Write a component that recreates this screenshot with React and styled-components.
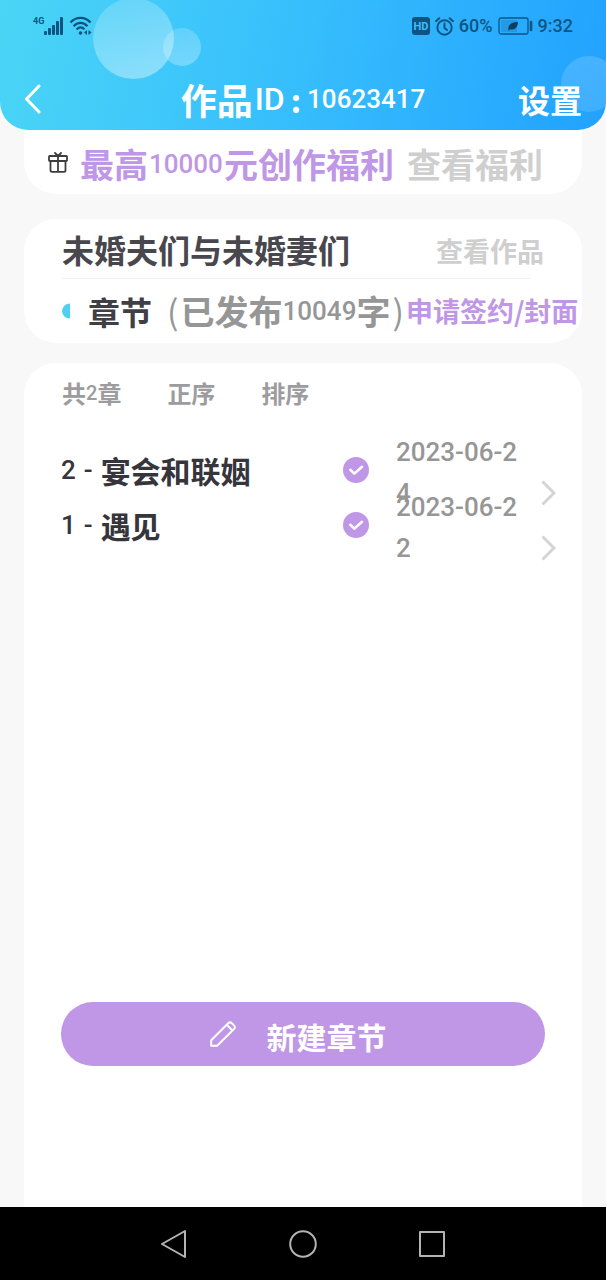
import React, { useState } from 'react';
import styled, { createGlobalStyle } from 'styled-components';

const GlobalStyle = createGlobalStyle`
  * {
    box-sizing: border-box;
  }
  body {
    margin: 0;
    background: #f8f8f8;
    font-family: 'Noto Sans CJK SC', sans-serif;
  }
  button {
    padding: 0;
    border: none;
    background: none;
    font-family: inherit;
    cursor: pointer;
  }
  a {
    text-decoration: none;
  }
  svg {
    flex-shrink: 0;
  }
`;

const Page = styled.div`
  min-height: 100vh;
  display: flex;
  flex-direction: column;
`;

const Header = styled.header`
  position: relative;
  overflow: hidden;
  border-radius: 0 0 28px 28px;
  background: linear-gradient(100deg, #4ad5f6 0%, #38c0fc 45%, #22a2ff 100%);
`;

const Bubble = styled.span`
  position: absolute;
  top: ${(props) => props.$top}px;
  left: ${(props) => props.$left};
  width: ${(props) => props.$size}px;
  height: ${(props) => props.$size}px;
  border-radius: 50%;
  background: linear-gradient(
    ${(props) => props.$angle},
    rgba(255, 255, 255, 0.16),
    rgba(255, 255, 255, ${(props) => props.$strength})
  );
`;

const StatusBar = styled.div`
  position: relative;
  display: flex;
  justify-content: space-between;
  align-items: center;
  height: 52px;
  padding: 0 33px;
  color: #0d5580;
`;

const StatusGroup = styled.div`
  display: flex;
  align-items: center;
  gap: 5px;
`;

const StatusText = styled.span`
  font-family: Roboto, sans-serif;
  font-size: 18px;
  font-weight: 500;
  line-height: 24px;
`;

const NavBar = styled.div`
  position: relative;
  display: grid;
  grid-template-columns: 1fr auto 1fr;
  align-items: center;
  height: 62px;
  margin-top: 16px;
  padding: 0 24px;
  color: #fff;
`;

const BackButton = styled.button`
  display: flex;
  justify-self: start;
  color: #fff;
`;

const Title = styled.h1`
  display: flex;
  align-items: center;
  margin: 0;
  font-size: 36px;
  font-weight: 700;
  line-height: 48px;
`;

const TitleId = styled.span`
  padding-left: 2px;
  font-family: Roboto, sans-serif;
  font-size: 32px;
  font-weight: 500;
`;

const Colon = styled.span`
  padding: 0 6px;
  font-size: 32px;
`;

const Num = styled.span`
  padding: 0 ${(props) => props.$gap || 0}px;
  font-family: Roboto, sans-serif;
  font-size: ${(props) => props.$size || 26}px;
  font-weight: ${(props) => props.$weight || 400};
`;

const SettingsButton = styled.button`
  justify-self: end;
  color: #fff;
  font-size: 32px;
  font-weight: 700;
  line-height: 48px;
`;

const Card = styled.section`
  margin: 0 24px;
  background: #fff;
  border-radius: 32px;
`;

const PromoCard = styled(Card)`
  display: flex;
  align-items: center;
  height: 64px;
  padding: 0 24px;
  border-radius: 0 0 32px 32px;
  white-space: nowrap;
`;

const PromoText = styled.strong`
  display: flex;
  align-items: center;
  margin: 0 13px 0 12px;
  padding-top: 4px;
  color: #c096e6;
  font-size: 34px;
  font-weight: 700;
  line-height: 48px;
`;

const PromoLink = styled.a`
  padding-top: 4px;
  color: #cfcfcf;
  font-size: 34px;
  font-weight: 700;
  line-height: 48px;
`;

const WorkCard = styled(Card)`
  margin-top: 25px;
  white-space: nowrap;
`;

const WorkRow = styled.div`
  display: flex;
  align-items: center;
  justify-content: space-between;
  height: 59px;
  padding: 0 38px;
`;

const WorkTitle = styled.h2`
  margin: 0;
  color: #47474d;
  font-size: 32px;
  font-weight: 700;
  line-height: 48px;
`;

const WorkLink = styled.a`
  padding-top: 4px;
  color: #cfcfcf;
  font-size: 27px;
  font-weight: 700;
  line-height: 48px;
`;

const Divider = styled.hr`
  height: 1px;
  margin: 0 52px 0 37px;
  border: none;
  background: #f1f1f1;
`;

const ChapterSummary = styled.div`
  display: flex;
  align-items: center;
  height: 64px;
  padding: 0 6px 0 37px;
`;

const SummaryLabel = styled.h3`
  margin: 0 13px 0 17px;
  color: #3f3f45;
  font-size: 32px;
  font-weight: 700;
  line-height: 48px;
`;

const SummaryCount = styled.span`
  display: flex;
  flex: 1;
  align-items: center;
  color: #969696;
  font-size: 34px;
  font-weight: 700;
  line-height: 48px;
`;

const Paren = styled.span`
  padding: 0 2px;
  font-weight: 400;
`;

const SignLink = styled.a`
  color: #c096e6;
  font-size: 27px;
  font-weight: 700;
  line-height: 48px;
`;

const ChaptersCard = styled(Card)`
  display: flex;
  flex: 1;
  flex-direction: column;
  margin-top: 20px;
  border-radius: 32px 32px 0 0;
`;

const Toolbar = styled.div`
  display: flex;
  align-items: center;
  gap: 46px;
  height: 60px;
  padding: 0 38px;
`;

const ChapterTotal = styled.span`
  display: flex;
  align-items: center;
  color: #9c9c9e;
  font-size: 24px;
  font-weight: 700;
  line-height: 36px;
`;

const SortButton = styled.button`
  color: #9c9c9e;
  font-size: 24px;
  font-weight: 700;
  line-height: 36px;
`;

const ChapterList = styled.ul`
  margin: 19px 0 0;
  padding: 0 0 20px;
  overflow: hidden;
  list-style: none;
`;

const ChapterRow = styled.li`
  display: flex;
  align-items: center;
  height: 55px;
  padding: 0 26px 0 37px;
`;

const ChapterLink = styled.a`
  display: flex;
  flex: 1;
  align-items: center;
  gap: 8px;
  color: #35353b;
  font-size: 30px;
  font-weight: 700;
  line-height: 48px;
`;

// narrow column, so the date wraps onto a second line
const ChapterDate = styled.time`
  width: 124px;
  margin: 0 21px 0 27px;
  padding-top: 6px;
  color: #969696;
  font-family: Roboto, sans-serif;
  font-size: 26px;
  font-weight: 500;
  line-height: 41px;
  word-break: break-all;
`;

const RowArrow = styled.span`
  display: flex;
  align-items: center;
  height: 41px;
  margin-top: 47px;
`;

const CreateButton = styled.button`
  display: flex;
  align-items: center;
  justify-content: center;
  gap: 31px;
  height: 64px;
  margin: auto 37px 141px;
  padding-right: 10px;
  border-radius: 32px;
  background: #c096e6;
  color: #fff;
  font-size: 30px;
  font-weight: 700;
`;

const CreateLabel = styled.span`
  padding-top: 4px;
  line-height: 48px;
`;

const SystemNav = styled.nav`
  display: flex;
  align-items: center;
  justify-content: center;
  gap: 100px;
  height: 73px;
  background: #000;
`;

const SystemButton = styled.button`
  display: flex;
`;

const SignalIcon = () => (
  <svg width="31" height="20" viewBox="0 0 31 20" fill="currentColor">
    <text x="0" y="8" fontSize="9" fontWeight="700" fontFamily="Roboto, sans-serif">4G</text>
    <rect x="11" y="15" width="3" height="4" rx="1" />
    <rect x="15" y="12" width="3" height="7" rx="1" />
    <rect x="19" y="9" width="3" height="10" rx="1" />
    <rect x="23" y="5" width="3" height="14" rx="1" />
    <rect x="27" y="1" width="3" height="18" rx="1" />
  </svg>
);

const WifiIcon = () => (
  <svg width="24" height="20" viewBox="0 0 24 20" fill="none" stroke="currentColor" strokeWidth="2.2">
    <path d="M1.5 6.5C7 0.2 16 0.2 21.5 6.5" />
    <path d="M4.6 10.2C8.6 5.8 14.6 5.8 18.4 10.2" />
    <path d="M7.6 13.4C10 10.8 13.2 10.8 15.4 13.4" />
    <circle cx="11.5" cy="17" r="1.8" fill="currentColor" stroke="none" />
    <path d="M18 14v5l-3-2.5zM19.5 14v5l3-2.5z" fill="currentColor" stroke="none" />
  </svg>
);

const HdIcon = () => (
  <svg width="18" height="18" viewBox="0 0 18 18">
    <rect width="18" height="18" rx="3" fill="currentColor" />
    <text x="9" y="13" textAnchor="middle" fontSize="11" fontWeight="700" fontFamily="Roboto, sans-serif" fill="#43bdfb">HD</text>
  </svg>
);

const AlarmIcon = () => (
  <svg width="19" height="19" viewBox="0 0 19 19" fill="none" stroke="currentColor" strokeWidth="2" strokeLinecap="round">
    <circle cx="9.5" cy="10.5" r="7.2" />
    <path d="M9.5 6.5v4.5l2.5 2M1 4.2L4.3 1.2M18 4.2L14.7 1.2" />
  </svg>
);

const BatteryIcon = () => (
  <svg width="35" height="18" viewBox="0 0 35 18" fill="none" stroke="currentColor">
    <rect x="1" y="1" width="29" height="16" rx="2" strokeWidth="1.3" />
    <rect x="3" y="3" width="16" height="12" fill="currentColor" fillOpacity="0.2" stroke="none" />
    <path d="M10.5 13.5C9.5 8 13 5.5 20 4.8C20 10.5 16.5 13.5 12 12.3L10.5 13.8z" fill="#0b3f62" stroke="none" />
    <path d="M33 5v8" strokeWidth="2.6" strokeLinecap="round" />
  </svg>
);

const BackIcon = () => (
  <svg width="17" height="30" viewBox="0 0 17 30" fill="none" stroke="currentColor" strokeWidth="3" strokeLinecap="round" strokeLinejoin="round">
    <path d="M15 2L2.5 15L15 28" />
  </svg>
);

const GiftIcon = () => (
  <svg width="20" height="21" viewBox="0 0 20 21" fill="none" stroke="#3d3d42" strokeWidth="1.8" strokeLinecap="round" strokeLinejoin="round">
    <rect x="1" y="4" width="18" height="5" rx="0.8" />
    <path d="M2.5 9v9.2a1.6 1.6 0 0 0 1.6 1.6h11.8a1.6 1.6 0 0 0 1.6-1.6V9M10 4v15.8M7 1L10 4L13 1" />
  </svg>
);

const HalfDot = () => (
  <svg width="10" height="16" viewBox="0 0 10 16">
    <path d="M9 0.5A8 7.5 0 0 0 9 15.5z" fill="#4fcff2" />
  </svg>
);

const CheckIcon = () => (
  <svg width="26" height="26" viewBox="0 0 26 26" fill="none">
    <circle cx="13" cy="13" r="13" fill="#c096e6" />
    <path d="M7.3 12.8L11.4 16.6L19 9.8" stroke="#fff" strokeWidth="2.6" strokeLinecap="round" strokeLinejoin="round" />
  </svg>
);

const ArrowIcon = () => (
  <svg width="15" height="26" viewBox="0 0 15 26" fill="none" stroke="#d4d4d4" strokeWidth="3">
    <path d="M1.5 1.5L13 13L1.5 24.5" />
  </svg>
);

const PencilIcon = () => (
  <svg width="26" height="26" viewBox="0 0 26 26" fill="none" stroke="currentColor" strokeWidth="2" strokeLinejoin="round">
    <path d="M1.2 19.2L18.2 2.2a2.6 2.6 0 0 1 3.6 0l2.2 2.2a2.6 2.6 0 0 1 0 3.6L7.2 24.8H1.2z" />
    <path d="M16.8 3.8l5.4 5.4" />
  </svg>
);

const chapters = [
  { no: 2, name: '宴会和联姻', date: '2023-06-24' },
  { no: 1, name: '遇见', date: '2023-06-22' },
];

const App = () => {
  const [ascending, setAscending] = useState(false);
  const rows = ascending ? [...chapters].reverse() : chapters;

  return (
    <Page>
      <GlobalStyle />
      <Header>
        <Bubble $top={-2} $left="93px" $size={81} $angle="160deg" $strength={0.42} />
        <Bubble $top={28} $left="163px" $size={38} $angle="160deg" $strength={0.3} />
        <Bubble $top={56} $left="calc(100% - 45px)" $size={56} $angle="200deg" $strength={0.12} />
        <StatusBar>
          <StatusGroup>
            <SignalIcon />
            <WifiIcon />
          </StatusGroup>
          <StatusGroup>
            <HdIcon />
            <AlarmIcon />
            <StatusText>60%</StatusText>
            <BatteryIcon />
            <StatusText>9:32</StatusText>
          </StatusGroup>
        </StatusBar>
        <NavBar>
          <BackButton aria-label="返回">
            <BackIcon />
          </BackButton>
          <Title>
            作品<TitleId>ID</TitleId>
            <Colon>:</Colon>
            <Num $weight={500}>10623417</Num>
          </Title>
          <SettingsButton>设置</SettingsButton>
        </NavBar>
      </Header>

      <PromoCard>
        <GiftIcon />
        <PromoText>
          最高<Num $gap={1} $weight={500}>10000</Num>元创作福利
        </PromoText>
        <PromoLink href="#welfare">查看福利</PromoLink>
      </PromoCard>

      <WorkCard>
        <WorkRow>
          <WorkTitle>未婚夫们与未婚妻们</WorkTitle>
          <WorkLink href="#work">查看作品</WorkLink>
        </WorkRow>
        <Divider />
        <ChapterSummary>
          <HalfDot />
          <SummaryLabel>章节</SummaryLabel>
          <SummaryCount>
            <Paren>(</Paren>已发布<Num $weight={500}>10049</Num>字<Paren>)</Paren>
          </SummaryCount>
          <SignLink href="#sign">申请签约/封面</SignLink>
        </ChapterSummary>
      </WorkCard>

      <ChaptersCard>
        <Toolbar>
          <ChapterTotal>
            共<Num $size={20} $weight={500}>2</Num>章
          </ChapterTotal>
          <SortButton onClick={() => setAscending(!ascending)}>正序</SortButton>
          <SortButton>排序</SortButton>
        </Toolbar>
        <ChapterList>
          {rows.map((chapter) => (
            <ChapterRow key={chapter.no}>
              <ChapterLink href={`#chapter-${chapter.no}`}>
                <Num $weight={500}>{chapter.no}</Num>
                <Num $weight={500}>-</Num>
                {chapter.name}
              </ChapterLink>
              <CheckIcon />
              <ChapterDate>{chapter.date}</ChapterDate>
              <RowArrow>
                <ArrowIcon />
              </RowArrow>
            </ChapterRow>
          ))}
        </ChapterList>
        <CreateButton>
          <PencilIcon />
          <CreateLabel>新建章节</CreateLabel>
        </CreateButton>
      </ChaptersCard>

      <SystemNav>
        <SystemButton aria-label="后退">
          <svg width="28" height="30" viewBox="0 0 28 30" fill="none" stroke="#b4b4b4" strokeWidth="2" strokeLinejoin="round">
            <path d="M25 2v26L2 15z" />
          </svg>
        </SystemButton>
        <SystemButton aria-label="主页">
          <svg width="30" height="30" viewBox="0 0 30 30" fill="none" stroke="#b4b4b4" strokeWidth="2">
            <circle cx="15" cy="15" r="12.8" />
          </svg>
        </SystemButton>
        <SystemButton aria-label="最近任务">
          <svg width="28" height="28" viewBox="0 0 28 28" fill="none" stroke="#b4b4b4" strokeWidth="2" strokeLinejoin="round">
            <rect x="2" y="2" width="24" height="24" />
          </svg>
        </SystemButton>
      </SystemNav>
    </Page>
  );
};

export default App;
